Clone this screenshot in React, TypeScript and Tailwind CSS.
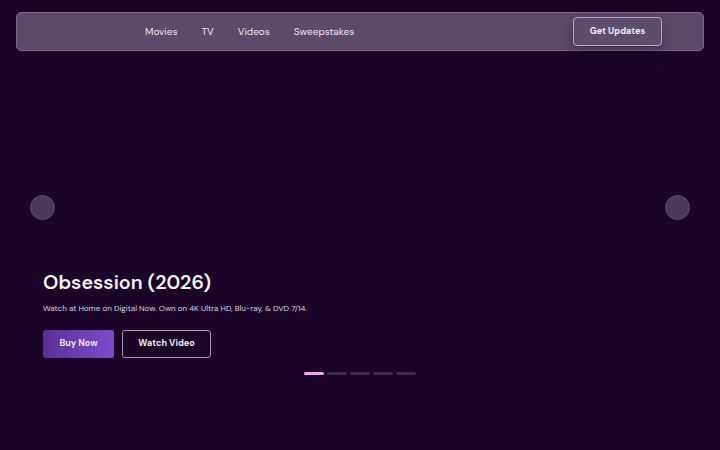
export default function App() {
  const slides = [0, 1, 2, 3, 4];
  const active = 0;

  return (
    <div
      className="relative w-[720px] h-[450px] overflow-hidden bg-[#1a0529] text-white"
      style={{ fontFamily: '"DM Sans", Inter, "Noto Sans", sans-serif' }}
    >
      <header className="pt-3 px-4">
        <nav className="flex items-center h-[39px] rounded-[5px] border border-[#7a6a88] bg-[#5b4a68] pl-[128px] pr-[41px]">
          <div className="flex items-center gap-[24px] text-[10px] text-[#ece6f1]">
            <a>Movies</a>
            <a>TV</a>
            <a>Videos</a>
            <a>Sweepstakes</a>
          </div>
          <button className="ml-auto w-[89px] h-[29px] rounded-[4px] border border-[#b3a7bf] bg-[#5d4c6b] text-[9px] font-bold text-[#f1ecf5] shadow-[0_6px_14px_rgba(20,4,32,0.35)]">
            Get Updates
          </button>
        </nav>
      </header>

      {/* carousel arrows */}
      <button className="absolute left-[30px] top-[195px] w-[25px] h-[25px] rounded-full bg-[#483a5a] border border-[#5a4c6c]" />
      <button className="absolute right-[30px] top-[195px] w-[25px] h-[25px] rounded-full bg-[#483a5a] border border-[#5a4c6c]" />

      <section className="pl-[43px] pt-[217px]">
        <h1 className="text-[19.7px] font-semibold leading-[28px] text-[#f6f2f8]">
          Obsession (2026)
        </h1>
        <p className="mt-[6px] text-[8px] leading-[12px] text-[#d9d0e0]">
          Watch at Home on Digital Now. Own on 4K Ultra HD, Blu-ray, &amp; DVD 7/14.
        </p>
        <div className="mt-[16px] flex gap-2">
          <button className="w-[71px] h-[28px] rounded-[3px] bg-gradient-to-r from-[#5d2f94] to-[#7c4ccb] text-[9px] font-bold text-[#efe7f7]">
            Buy Now
          </button>
          <button className="w-[89px] h-[28px] rounded-[3px] border border-[#a89cb4] text-[9px] font-bold text-[#efe7f7]">
            Watch Video
          </button>
        </div>
      </section>

      <div className="mt-[14px] flex justify-center gap-[3px]">
        {slides.map((i) => (
          <span
            key={i}
            className={i === active ? 'w-[20px] h-[3px] rounded-full bg-[#e8a9f2]' : 'w-[20px] h-[3px] rounded-full bg-[#3e2c4e]'}
          />
        ))}
      </div>
    </div>
  );
}
